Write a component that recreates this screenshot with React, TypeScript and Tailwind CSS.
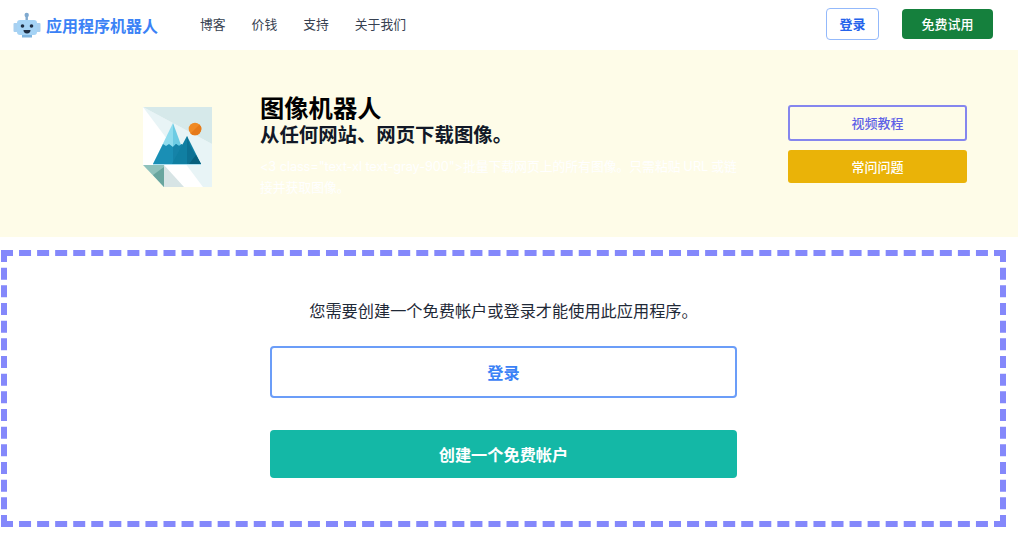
const cjk = { fontFamily: '"Noto Sans CJK SC", "Noto Sans", sans-serif' }

function RobotLogo() {
  return (
    <svg width="28" height="26" viewBox="0 0 28 26" className="shrink-0">
      <rect x="12.5" y="3" width="2.4" height="6" fill="#7fa9cf" />
      <circle cx="13.7" cy="3" r="2.2" fill="#7fa9cf" />
      <rect x="0.5" y="11" width="4" height="9" rx="1" fill="#a8d0f0" />
      <rect x="23.5" y="11" width="4" height="9" rx="1" fill="#a8d0f0" />
      <rect x="4" y="8" width="20" height="15" rx="3" fill="#a5d3f5" />
      <rect x="9" y="23" width="10" height="2.5" fill="#7fb4de" />
      <circle cx="9.5" cy="14" r="1.8" fill="#1f2f44" />
      <circle cx="18.5" cy="14" r="1.8" fill="#1f2f44" />
      <path d="M10.5 18h7a3.5 3.5 0 0 1-7 0z" fill="#1f2f44" />
    </svg>
  )
}

function PictureIcon() {
  return (
    <svg width="70" height="80" viewBox="0 0 70 80" className="mt-[57px] shrink-0">
      {/* page */}
      <path d="M0 0h69v80H21L0 58z" fill="#ffffff" />
      <path d="M0 0l69 37v43h-9z" fill="#e8f4f6" />
      <path d="M0 0h69v37z" fill="#d6e9ea" />
      {/* folded corner */}
      <path d="M21 58l20 22H21z" fill="#d7e4e5" />
      <path d="M0 58h21v22z" fill="#8fc1bb" />
      <path d="M21 60v20L10 68z" fill="#68a59e" />
      {/* sun */}
      <circle cx="52" cy="22" r="6.3" fill="#f08a24" />
      <path d="M47.5 26.5l9-9a6.3 6.3 0 0 1-9 9z" fill="#e67a1a" />
      {/* mountains */}
      <path d="M30 16L10 57h20z" fill="#8fdcee" />
      <path d="M30 16l15 41H30z" fill="#6ccbe3" />
      <path d="M20 37l3 2 3-2 4 3 3-3 3 2 3-2 12 20H10z" fill="#1a8fb5" />
      <path d="M30 40l3-3 3 2 3-2 8 20H30z" fill="#1583a8" />
      <path d="M44 29l-15 28h29z" fill="#107fa2" />
      <path d="M44 29l3 10 11 18H44z" fill="#0c7193" />
      <path d="M58 57H46l7-9z" fill="#075f7c" />
      <rect x="10" y="57" width="48" height="1" fill="#a9def0" />
    </svg>
  )
}

export default function App() {
  return (
    <div className="w-[1018px] bg-white" style={cjk}>
      <header className="flex h-[48px] items-center pl-[13px] pr-[25px]">
        <div className="mt-[2px] flex items-center gap-[5px]">
          <RobotLogo />
          <span className="text-[16px] font-bold text-[#3b82f6]">应用程序机器人</span>
        </div>
        <nav className="ml-[42px] flex gap-[26px] text-[12.8px] text-[#374151]">
          <span>博客</span>
          <span>价钱</span>
          <span>支持</span>
          <span>关于我们</span>
        </nav>
        <div className="ml-auto flex items-center gap-[23px]">
          <button className="flex h-[32px] w-[53px] items-center justify-center rounded border border-[#93b9fb] text-[13px] font-bold text-[#2563eb]">
            登录
          </button>
          <button className="flex h-[30px] w-[91px] items-center justify-center rounded bg-[#15803d] text-[13px] font-medium text-white">
            免费试用
          </button>
        </div>
      </header>

      <section className="mt-[2px] flex h-[187px] items-start bg-[#fefce8] pl-[143px]">
        <PictureIcon />
        <div className="mt-[42px] ml-[47px] w-[486px]">
          <h1 className="text-[24.3px] leading-[30px] font-bold text-black">图像机器人</h1>
          <h2 className="text-[19.4px] leading-[24px] font-bold text-[#111827]">从任何网站、网页下载图像。</h2>
          <p className="mt-[10px] text-[12.8px] leading-[20px] text-white">
            <span className="font-['Inter'] tracking-[-0.1px]">{'<3 class="text-xl text-gray-900">'}</span>
            批量下载网页上的所有图像。只需粘贴 <span className="font-['Inter']">URL</span> 或链接并获取图像。
          </p>
        </div>
        <div className="mt-[55px] ml-[42px] flex w-[179px] flex-col gap-[9px]">
          <button className="flex h-[36px] items-center justify-center rounded-[3px] border-2 border-[#8586ee] text-[13px] font-medium text-[#5f62e6]">
            视频教程
          </button>
          <button className="flex h-[33px] items-center justify-center rounded-[3px] bg-[#eab308] text-[13px] font-medium text-white">
            常问问题
          </button>
        </div>
      </section>

      <main className="mt-[13px] ml-px flex h-[277px] w-[1005px] flex-col items-center border-[6px] border-dashed border-[#8488fb] pt-[42px]">
        <p className="text-[16.2px] leading-[24px] text-[#1f2937]">您需要创建一个免费帐户或登录才能使用此应用程序。</p>
        <button className="mt-[24px] flex h-[52px] w-[467px] items-center justify-center rounded border-2 border-[#6b9df8] text-[16.2px] font-bold text-[#3b82f6]">
          登录
        </button>
        <button className="mt-[32px] flex h-[48px] w-[467px] items-center justify-center rounded bg-[#14b8a6] text-[16.2px] font-bold text-white">
          创建一个免费帐户
        </button>
      </main>
    </div>
  )
}
